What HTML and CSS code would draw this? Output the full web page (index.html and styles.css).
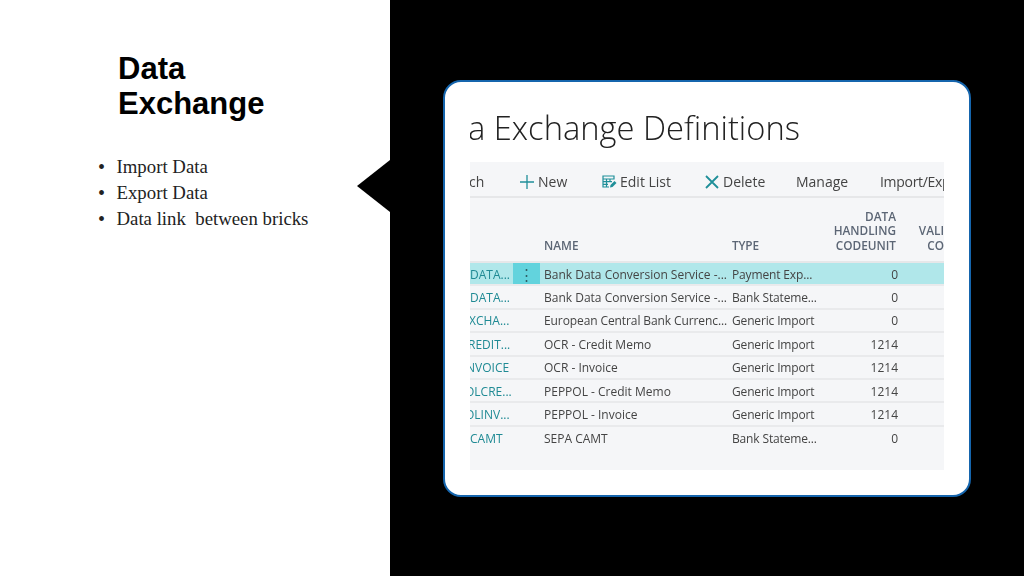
FILE: index.html
```html
<!DOCTYPE html>
<html lang="en">
<head>
    <meta charset="UTF-8">
    <title>Data Exchange</title>
    <link rel="stylesheet" href="styles.css">
</head>
<body>
    <div class="slide">
        <div class="side">
            <h1>Data<br>Exchange</h1>
            <ul class="points">
                <li>Import Data</li>
                <li>Export Data</li>
                <li>Data link  between bricks</li>
            </ul>
        </div>
        <div class="stage">
            <div class="pointer"></div>
            <div class="card">
                <div class="shot">
                    <div class="pageTitle">a Exchange Definitions</div>
                    <div class="panel">
                        <div class="toolbar">
                            <span class="tool toolSearch">ch</span>
                            <span class="tool toolNew">
                                <svg width="16" height="16" viewBox="0 0 16 16"><path d="M8 1v14M1 8h14" stroke="#1f8f99" stroke-width="1.3" fill="none"/></svg>
                                New
                            </span>
                            <span class="tool toolEdit">
                                <svg width="15" height="14" viewBox="0 0 15 14"><path d="M1 1h11v3H1zM1 4v8h6M4.500 4v8M8 4v3M1 6.700h9M1 9.400h5" stroke="#1f8f99" stroke-width="1.200" fill="none"/><path d="M8 12.500l.5-2.500 4-4 2 2-4 4z" fill="#1f8f99"/></svg>
                                Edit List
                            </span>
                            <span class="tool toolDelete">
                                <svg width="14" height="14" viewBox="0 0 14 14"><path d="M1 1l12 12M13 1L1 13" stroke="#1f8f99" stroke-width="1.800" fill="none"/></svg>
                                Delete
                            </span>
                            <span class="tool toolManage">Manage</span>
                            <span class="tool toolImport">Import/Exp</span>
                        </div>
                        <div class="row head">
                            <span></span>
                            <span></span>
                            <span class="cellName">NAME</span>
                            <span class="cellType">TYPE</span>
                            <span class="num">DATA<br>HANDLING<br>CODEUNIT</span>
                            <span class="extra">VALI<br>CO</span>
                        </div>
                        <div class="row selected">
                            <span class="code">DATA...</span>
                            <span class="dots">⋮</span>
                            <span class="cellName">Bank Data Conversion Service -...</span>
                            <span class="cellType">Payment Exp...</span>
                            <span class="num">0</span>
                        </div>
                        <div class="row">
                            <span class="code">DATA...</span>
                            <span></span>
                            <span class="cellName">Bank Data Conversion Service -...</span>
                            <span class="cellType">Bank Stateme...</span>
                            <span class="num">0</span>
                        </div>
                        <div class="row">
                            <span class="code off1">XCHA...</span>
                            <span></span>
                            <span class="cellName tight">European Central Bank Currenc...</span>
                            <span class="cellType">Generic Import</span>
                            <span class="num">0</span>
                        </div>
                        <div class="row">
                            <span class="code off2">REDIT...</span>
                            <span></span>
                            <span class="cellName">OCR - Credit Memo</span>
                            <span class="cellType">Generic Import</span>
                            <span class="num">1214</span>
                        </div>
                        <div class="row">
                            <span class="code off3">NVOICE</span>
                            <span></span>
                            <span class="cellName">OCR - Invoice</span>
                            <span class="cellType">Generic Import</span>
                            <span class="num">1214</span>
                        </div>
                        <div class="row">
                            <span class="code off4">OLCRE...</span>
                            <span></span>
                            <span class="cellName">PEPPOL - Credit Memo</span>
                            <span class="cellType">Generic Import</span>
                            <span class="num">1214</span>
                        </div>
                        <div class="row">
                            <span class="code off4">OLINV...</span>
                            <span></span>
                            <span class="cellName">PEPPOL - Invoice</span>
                            <span class="cellType">Generic Import</span>
                            <span class="num">1214</span>
                        </div>
                        <div class="row last">
                            <span class="code">CAMT</span>
                            <span></span>
                            <span class="cellName">SEPA CAMT</span>
                            <span class="cellType">Bank Stateme...</span>
                            <span class="num">0</span>
                        </div>
                    </div>
                </div>
            </div>
        </div>
    </div>
</body>
</html>
```

FILE: styles.css
```css
html, body {
    margin: 0;
    padding: 0;
}

.slide {
    display: flex;
    width: 1024px;
    height: 576px;
    overflow: hidden;
    background: #000;
}

.side {
    width: 390px;
    flex: none;
    background: #fff;
    padding-top: 51px;
    box-sizing: border-box;
}

.side h1 {
    margin: 0 0 0 118px;
    font: bold 31px/35px "Liberation Sans", Arial, sans-serif;
    color: #000;
}

.points {
    list-style: none;
    margin: 33px 0 0 0;
    padding: 0 0 0 98px;
    font: 18.800px/26px "Liberation Serif", "Times New Roman", serif;
    color: #222;
}

.points li {
    display: flex;
    white-space: pre;
}

.points li::before {
    content: "•";
    width: 18.500px;
    flex: none;
    font-size: 20px;
}

.stage {
    flex: 1;
    position: relative;
    padding: 80px 0 0 53px;
}

.pointer {
    position: absolute;
    left: -33px;
    top: 160px;
    width: 33px;
    height: 52px;
    background: #000;
    clip-path: polygon(0 50%, 100% 0, 100% 100%);
}

.card {
    width: 528px;
    height: 417px;
    box-sizing: border-box;
    background: #fff;
    border: 2px solid #1565ad;
    border-radius: 18px;
    padding: 0 25px;
}

.shot {
    height: 100%;
    overflow: hidden;
    font-family: "Open Sans", "Noto Sans", sans-serif;
    filter: blur(0.3px);
}

.pageTitle {
    height: 80px;
    padding-top: 21px;
    box-sizing: border-box;
    font-size: 32.700px;
    line-height: 50px;
    font-weight: 300;
    color: #222;
    white-space: nowrap;
    text-indent: -2px;
}

.panel {
    height: 308px;
    background: #f5f6f8;
    font-size: 12px;
    color: #444;
}

.toolbar {
    position: relative;
    height: 36px;
    border-bottom: 2px solid #e6e7e9;
    box-sizing: border-box;
    font-size: 14px;
    color: #444;
    white-space: nowrap;
    overflow: hidden;
}

.tool {
    position: absolute;
    top: 1px;
    line-height: 38px;
    display: flex;
    align-items: center;
    gap: 3px;
}

.toolSearch { left: -1px; }
.toolNew { left: 49px; }
.toolEdit { left: 132px; }
.toolDelete { left: 235px; gap: 4px; }
.toolManage { left: 326px; }
.toolImport { left: 410px; letter-spacing: -0.300px; }

.row {
    display: grid;
    grid-template-columns: 43px 27px 192px 88px 78px 1fr;
    height: 23.400px;
    align-items: center;
    border-bottom: 2px solid #e9eaec;
    box-sizing: border-box;
    white-space: nowrap;
    overflow: hidden;
}

.row > span {
    overflow: hidden;
    padding-top: 1px;
}

.row.last {
    border-bottom: none;
}

.row.head {
    height: 65px;
    align-items: end;
    border-bottom: 2px solid #e6e7e9;
    font-size: 11.800px;
    line-height: 14.500px;
    font-weight: 600;
    color: #5c6675;
    padding-bottom: 9px;
}

.row.head .num {
    padding-right: 2px;
}

.row.selected {
    background: #b0e7ea;
    border-bottom: 2px solid #e9eaec;
}

.cellName {
    padding-left: 4px;
}

.cellName.tight {
    letter-spacing: -0.100px;
}

.cellType {
    letter-spacing: -0.150px;
}

.code {
    color: #1f8a94;
}

.off1 { text-indent: -1px; }
.off2 { text-indent: -2px; }
.off3 { text-indent: -4px; }
.off4 { text-indent: -5px; }

.row > .dots {
    align-self: stretch;
    padding-top: 0;
    background: #62d3dd;
    text-align: center;
    font-size: 15px;
    line-height: 22px;
    color: #2f5f66;
}

.num {
    text-align: right;
}

.extra {
    text-align: right;
    padding-left: 20px;
}
```
